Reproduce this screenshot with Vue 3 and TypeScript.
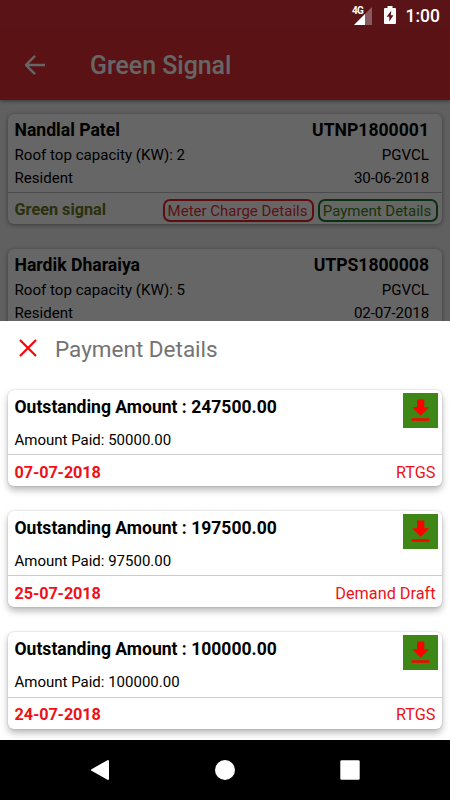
<script setup lang="ts">
interface Applicant {
  name: string
  code: string
  capacity: number
  board: string
  kind: string
  date: string
  status?: string
}
interface Payment {
  outstanding: string
  paid: string
  date: string
  mode: string
}

const applicants: Applicant[] = [
  { name: 'Nandlal Patel', code: 'UTNP1800001', capacity: 2, board: 'PGVCL', kind: 'Resident', date: '30-06-2018', status: 'Green signal' },
  { name: 'Hardik Dharaiya', code: 'UTPS1800008', capacity: 5, board: 'PGVCL', kind: 'Resident', date: '02-07-2018' },
]
const payments: Payment[] = [
  { outstanding: '247500.00', paid: '50000.00', date: '07-07-2018', mode: 'RTGS' },
  { outstanding: '197500.00', paid: '97500.00', date: '25-07-2018', mode: 'Demand Draft' },
  { outstanding: '100000.00', paid: '100000.00', date: '24-07-2018', mode: 'RTGS' },
]
</script>

<template>
  <div class="phone">
    <div class="page">
      <header class="status">
        <svg class="signal" width="24" height="20" viewBox="0 0 24 20">
          <path d="M22 2V20H4Z" fill="#fff" fill-opacity=".3" />
          <path d="M15 9V20H4Z" fill="#fff" />
        </svg>
        <span class="network">4G</span>
        <svg class="battery" width="12" height="18" viewBox="0 0 12 18">
          <path d="M3.500 0h5v2H11q1 0 1 1v14q0 1-1 1H1q-1 0-1-1V3q0-1 1-1h2.500z" fill="#fff" />
          <path d="M7.300 4.500 2.700 10.700h2.600v4.800L9.500 9.200H6.800z" fill="#5a1417" />
        </svg>
        <span class="clock">1:00</span>
      </header>
      <div class="appbar">
        <svg width="20" height="20" viewBox="0 0 20 20">
          <path d="M20 10H1.800M10 .9.9 10l9.100 9.100" fill="none" stroke="#fff" stroke-width="2.300" />
        </svg>
        <h1>Green Signal</h1>
      </div>
      <main class="list">
        <article v-for="a in applicants" :key="a.code" class="card applicant">
          <div class="row name"><b>{{ a.name }}</b><b>{{ a.code }}</b></div>
          <div class="row detail"><span>Roof top capacity (KW): {{ a.capacity }}</span><span>{{ a.board }}</span></div>
          <div class="row detail"><span>{{ a.kind }}</span><span class="date">{{ a.date }}</span></div>
          <div v-if="a.status" class="actions">
            <b>{{ a.status }}</b>
            <button class="meter">Meter Charge Details</button>
            <button class="pay">Payment Details</button>
          </div>
        </article>
      </main>
      <div class="scrim"></div>
    </div>

    <section class="sheet">
      <div class="sheet-head">
        <svg width="18" height="18" viewBox="0 0 18 18">
          <path d="M1 1 17 17M17 1 1 17" stroke="#f00" stroke-width="2.200" />
        </svg>
        <h2>Payment Details</h2>
      </div>
      <article v-for="p in payments" :key="p.date" class="card payment">
        <div class="top">
          <div class="amounts">
            <b>Outstanding Amount : {{ p.outstanding }}</b>
            <span>Amount Paid: {{ p.paid }}</span>
          </div>
          <div class="download">
            <svg width="35" height="35" viewBox="0 0 35 35">
              <path d="M14 6.500h7.300v7.700h4.800L17.600 22.700 9.200 14.200H14zM8.700 25.300h17.600v2.400H8.700z" fill="#f00" />
            </svg>
          </div>
        </div>
        <div class="bottom"><b>{{ p.date }}</b><span>{{ p.mode }}</span></div>
      </article>
    </section>

    <nav class="nav">
      <svg width="20" height="22" viewBox="0 0 20 22"><path d="M18 2v18L2 11z" fill="#fff" stroke="#fff" stroke-width="2" stroke-linejoin="round" /></svg>
      <svg width="20" height="20" viewBox="0 0 20 20"><circle cx="10" cy="10" r="10" fill="#fff" /></svg>
      <svg width="20" height="20" viewBox="0 0 20 20"><rect x=".3" y=".3" width="19.400" height="19.400" rx="1.300" fill="#fff" /></svg>
    </nav>
  </div>
</template>

<style>
body {
  margin: 0;
  background: #000;
}
</style>

<style scoped>
* {
  box-sizing: border-box;
}
.phone {
  width: 450px;
  height: 800px;
  overflow: hidden;
  display: flex;
  flex-direction: column;
  font-family: Roboto, "Noto Sans", sans-serif;
  color: #000;
  white-space: nowrap;
}
h1, h2 {
  margin: 0;
}
b {
  font-weight: 700;
}
.page {
  position: relative;
  height: 321px;
  flex: none;
  overflow: hidden;
  background: #f0f0f0;
}
.status {
  position: relative;
  z-index: 3;
  height: 30px;
  padding: 0 10px 0 0;
  background: #5a1417;
  display: flex;
  justify-content: flex-end;
  align-items: center;
  color: #fff;
}
.signal {
  margin: -1px 10px 0 0;
}
.network {
  position: absolute;
  left: 352px;
  top: 5px;
  font-size: 10px;
  line-height: 11px;
  font-weight: 700;
  letter-spacing: -.8px;
}
.battery {
  margin-right: 10px;
}
.clock {
  font-size: 17.500px;
  font-weight: 500;
  line-height: 30px;
  padding-top: 1px;
}
.appbar {
  position: relative;
  height: 70px;
  padding-left: 25px;
  background: #e02e34;
  box-shadow: 0 1px 4px rgba(0, 0, 0, .45);
  display: flex;
  align-items: center;
  gap: 45px;
}
.appbar h1 {
  color: #fff;
  font-size: 24.900px;
  font-weight: 500;
  line-height: 66px;
  padding-top: 2px;
}
.list {
  padding: 14px 8px 0;
  display: grid;
  gap: 25px;
}
.card {
  background: #fff;
  border-radius: 6px;
}
.applicant {
  height: 110px;
  padding-top: 5px;
  box-shadow: 0 1px 5px rgba(0, 0, 0, .4);
}
.row {
  display: flex;
  justify-content: space-between;
  padding: 0 13px 0 6.500px;
  height: 23px;
  line-height: 23px;
  font-size: 15.100px;
}
.date {
  letter-spacing: -.12px;
}
.name {
  height: 25px;
  font-size: 17.600px;
}
.actions {
  height: 32px;
  margin-top: 2px;
  padding: 0 4px 0 6.500px;
  border-top: 1px solid #bbb;
  display: flex;
  align-items: center;
  gap: 4px;
}
.actions b {
  margin-right: auto;
  padding-top: 1px;
  font-size: 16.250px;
  color: #6a7a22;
}
.actions button {
  height: 23px;
  margin-top: 3px;
  padding: 1px 2px 0 0;
  border: 2px solid;
  border-radius: 7px;
  background: #fff;
  font: 15px/19px Roboto, sans-serif;
}
.actions .meter {
  width: 151px;
  color: #e53238;
  border-color: #e62129;
}
.actions .pay {
  width: 120px;
  color: #3c8415;
  border-color: #1d762c;
}
.scrim {
  position: absolute;
  inset: 30px 0 0;
  z-index: 2;
  background: rgba(0, 0, 0, .6);
}
.sheet {
  height: 419px;
  flex: none;
  overflow: hidden;
  background: #fff;
  padding: 0 8px;
}
.sheet-head {
  height: 68.600px;
  padding: 0 0 14px 10.500px;
  display: flex;
  align-items: center;
  gap: 18.500px;
}
.sheet-head svg {
  margin-top: -1px;
}
.sheet-head h2 {
  font-size: 22.500px;
  font-weight: 400;
  color: #737373;
  padding-top: 1px;
}
.payment {
  height: 96.500px;
  margin-bottom: 24.750px;
  box-shadow: 0 4px 7px rgba(0, 0, 0, .28), 0 0 2px rgba(0, 0, 0, .2);
}
.top {
  height: 65.500px;
  border-bottom: 1px solid #ccc;
  display: flex;
  justify-content: space-between;
  padding: 3px 4px 0 6.500px;
}
.amounts {
  display: flex;
  flex-direction: column;
}
.amounts b {
  font-size: 17.560px;
  line-height: 27px;
  padding-top: 1px;
}
.amounts span {
  font-size: 15px;
  line-height: 22px;
  margin-top: 8px;
}
.download {
  width: 35px;
  height: 35px;
  background: #3e8615;
}
.download svg {
  display: block;
}
.bottom {
  height: 31px;
  padding: 1.500px 6.500px 0 6.500px;
  display: flex;
  justify-content: space-between;
  font-size: 16.250px;
  line-height: 31px;
  color: #ee1118;
}
.bottom b {
  letter-spacing: -.12px;
}
.nav {
  height: 60px;
  flex: none;
  background: #000;
  padding: 0 90px;
  display: flex;
  align-items: center;
  justify-content: space-between;
}
</style>
